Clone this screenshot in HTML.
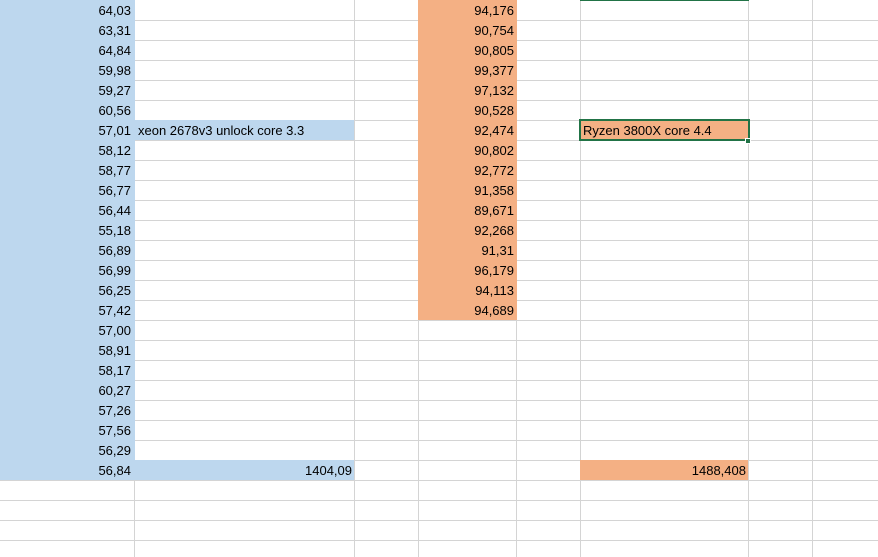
<!DOCTYPE html>
<html><head><meta charset="utf-8"><style>
*{margin:0;padding:0;box-sizing:border-box}
body{width:878px;height:557px;overflow:hidden;background:#fff;position:relative;font-family:"Liberation Sans",Arial,sans-serif;font-size:13px;color:#000}
.h{position:absolute;left:0;width:878px;height:1px;background:#d4d4d4}
.v{position:absolute;top:0;height:557px;width:1px;background:#d4d4d4}
.f{position:absolute}
.t{position:absolute;height:20px;line-height:21px;white-space:nowrap}
.r{text-align:right}
</style></head><body>
<div id="g"></div>
<script>
var g=document.getElementById('g'),s='';
for(var k=1;k<=27;k++)s+='<div class="h" style="top:'+(20*k)+'px"></div>';
[134,354,418,516,580,748,812].forEach(function(x){s+='<div class="v" style="left:'+x+'px"></div>'});
s+='<div class="f" style="left:0;top:0;width:135px;height:480px;background:#BDD7EE"></div>';
s+='<div class="f" style="left:135px;top:120px;width:219px;height:20px;background:#BDD7EE"></div>';
s+='<div class="f" style="left:135px;top:460px;width:219px;height:20px;background:#BDD7EE"></div>';
s+='<div class="f" style="left:418px;top:0;width:99px;height:320px;background:#F4B084"></div>';
s+='<div class="f" style="left:580px;top:460px;width:168px;height:20px;background:#F4B084"></div>';
s+='<div class="f" style="left:580px;top:120px;width:168px;height:20px;background:#F4B084"></div>';
s+='<div class="f" style="left:580px;top:0;width:169px;height:1px;background:#217346"></div>';
s+='<div class="f" style="left:579px;top:119px;width:171px;height:22px;border:2px solid #217346"></div>';
s+='<div class="f" style="left:745px;top:138px;width:6px;height:6px;background:#217346;border:1px solid #fff"></div>';
var a=['64,03','63,31','64,84','59,98','59,27','60,56','57,01','58,12','58,77','56,77','56,44','55,18','56,89','56,99','56,25','57,42','57,00','58,91','58,17','60,27','57,26','57,56','56,29','56,84'];
a.forEach(function(v,i){s+='<div class="t r" style="left:0;width:131px;top:'+(20*i)+'px">'+v+'</div>'});
var d=['94,176','90,754','90,805','99,377','97,132','90,528','92,474','90,802','92,772','91,358','89,671','92,268','91,31','96,179','94,113','94,689'];
d.forEach(function(v,i){s+='<div class="t r" style="left:418px;width:96px;top:'+(20*i)+'px">'+v+'</div>'});
s+='<div class="t" style="left:138px;top:120px">xeon 2678v3 unlock core 3.3</div>';
s+='<div class="t r" style="left:135px;width:217px;top:460px">1404,09</div>';
s+='<div class="t" style="left:583px;top:120px">Ryzen 3800X core 4.4</div>';
s+='<div class="t r" style="left:580px;width:166px;top:460px">1488,408</div>';
g.innerHTML=s;
</script>
</body></html>
